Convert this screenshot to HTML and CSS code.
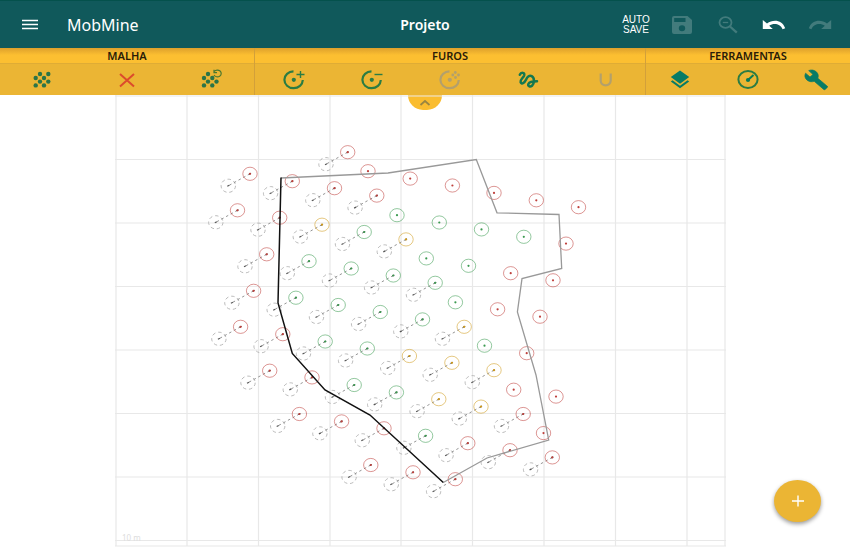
FILE: index.html
```html
<!DOCTYPE html>
<html lang="pt">
<head>
<meta charset="utf-8">
<meta name="viewport" content="width=device-width, initial-scale=1">
<title>MobMine - Projeto</title>
<link rel="stylesheet" href="styles.css">
</head>
<body>
<header class="appbar">
  <div class="brand">
    <button class="bar-btn menu-btn" aria-label="Menu"><svg width="16" height="12" viewBox="0 0 16 12"><path d="M0 1.500h16M0 5.500h16M0 9.500h16" stroke="#fff" stroke-width="1.500"/></svg></button>
    <span class="brand-name">MobMine</span>
  </div>
  <h1 class="title">Projeto</h1>
  <div class="actions">
    <button class="bar-btn autosave">AUTO<br>SAVE</button>
    <button class="bar-btn dim" aria-label="Salvar"><svg width="20" height="18" viewBox="0 0 20 18"><path fill="currentColor" fill-rule="evenodd" d="M2 0h13.500L20 4v12a2 2 0 0 1-2 2H2a2 2 0 0 1-2-2V2a2 2 0 0 1 2-2zM2.200 2v4h11.300V2zM10 9.200a3.200 3 0 1 0 0 6a3.200 3 0 1 0 0-6z"/></svg></button>
    <button class="bar-btn dim" aria-label="Diminuir zoom"><svg width="20" height="18" viewBox="0 0 20 18"><g fill="none" stroke="currentColor"><ellipse cx="7.500" cy="6.500" rx="6" ry="5.300" stroke-width="1.800"/><path d="M4.800 6.500h5.400" stroke-width="1.300"/><path d="M12 10.500l6.800 6.200" stroke-width="2.300"/></g></svg></button>
    <button class="bar-btn" aria-label="Desfazer"><svg width="24" height="12" viewBox="0 0 24 12"><path fill="currentColor" d="M.8 1v9h10L7.200 6.800C11 4 18 4 20.600 10.200l2.600-.9C20 .6 11 .2 5 4.600z"/></svg></button>
    <button class="bar-btn dim" aria-label="Refazer"><svg width="24" height="12" viewBox="0 0 24 12"><path fill="currentColor" d="M23.200 1v9h-10l3.600-3.200C13 4 6 4 3.400 10.200L.8 9.300C4 .6 13 .2 19 4.600z"/></svg></button>
  </div>
</header>

<nav class="toolbar">
  <section class="group">
    <h2 class="group-name">MALHA</h2>
    <div class="tools">
      <button class="tool" aria-label="Criar malha"><svg width="24" height="22" viewBox="0 0 24 22"><g fill="#2b7447"><circle cx="10" cy="5" r="2.200"/><circle cx="18.300" cy="5" r="2.200"/><circle cx="5.700" cy="9" r="2.200"/><circle cx="14" cy="9" r="2.200"/><circle cx="10" cy="12.600" r="2.200"/><circle cx="18.300" cy="12.600" r="2.200"/><circle cx="5.700" cy="16.400" r="2.200"/><circle cx="14" cy="16.400" r="2.200"/></g></svg></button>
      <button class="tool" aria-label="Excluir malha"><svg width="24" height="22" viewBox="0 0 24 22"><path d="M5 5l14 12.400M19 5L5 17.400" stroke="#dc4b2c" stroke-width="2"/></svg></button>
      <button class="tool" aria-label="Restaurar malha"><svg width="24" height="22" viewBox="0 0 24 22"><g fill="#2b7447"><circle cx="8" cy="5" r="2.200"/><circle cx="4" cy="9" r="2.200"/><circle cx="12.300" cy="9" r="2.200"/><circle cx="8" cy="12.600" r="2.200"/><circle cx="16.500" cy="12.600" r="2.200"/><circle cx="4" cy="16.400" r="2.200"/><circle cx="12.300" cy="16.400" r="2.200"/></g><path d="M14.300 2.500A3.800 3.400 0 1 1 14 6M14 .8v2.800h3" fill="none" stroke="#4a782f" stroke-width="1.200"/></svg></button>
    </div>
  </section>
  <section class="group">
    <h2 class="group-name">FUROS</h2>
    <div class="tools">
      <button class="tool" aria-label="Adicionar furo"><svg width="24" height="22" viewBox="0 0 24 22"><path d="M11.500 2.400A9.200 8.400 0 1 0 20.800 11" fill="none" stroke="#2b7c43" stroke-width="2.200"/><circle cx="11.800" cy="10.800" r="2.100" fill="#2b7c43"/><path d="M14.500 5.500h8M18.500 2v7" stroke="#2b7c43" stroke-width="1.400"/></svg></button>
      <button class="tool" aria-label="Remover furo"><svg width="24" height="22" viewBox="0 0 24 22"><path d="M11.500 2.400A9.200 8.400 0 1 0 20.800 11" fill="none" stroke="#2b7c43" stroke-width="2.200"/><circle cx="11.800" cy="10.800" r="2.100" fill="#2b7c43"/><path d="M14.500 5.500h8" stroke="#2b7c43" stroke-width="1.400"/></svg></button>
      <button class="tool" aria-label="Furos em grupo" disabled><svg width="24" height="22" viewBox="0 0 24 22"><path d="M11.500 2.400A9.200 8.400 0 1 0 20.800 11" fill="none" stroke="#b3a06c" stroke-width="2.200"/><g fill="#b3a06c"><circle cx="11.800" cy="10.800" r="2.100"/><circle cx="17.300" cy="3.500" r="1.400"/><circle cx="14.800" cy="6" r="1.400"/><circle cx="20.500" cy="6" r="1.400"/><circle cx="17.500" cy="8.500" r="1.400"/></g></svg></button>
      <button class="tool" aria-label="Ligar furos"><svg width="24" height="22" viewBox="0 0 24 22"><path d="M3.800 5.800C5 3 9 3.300 8.200 6.300C7.400 9 4 10.500 4.600 13C5.500 15.800 8.500 14 10 10.800C11.500 7.500 13.500 6 15.700 7.200C18.800 9 18.500 14.500 16 16.800C14 18.500 11.500 17 12.500 14.700C13.700 12.300 17 12.200 21 12.200" fill="none" stroke="#14784f" stroke-width="2.500" stroke-linecap="round" stroke-linejoin="round"/></svg></button>
      <button class="tool" aria-label="Ajuste magnético" disabled><svg width="24" height="22" viewBox="0 0 24 22"><path d="M6.700 4.500v7c0 6.500 10 6.500 10 0v-7" fill="none" stroke="#b3a06c" stroke-width="2.200"/></svg></button>
    </div>
  </section>
  <section class="group">
    <h2 class="group-name">FERRAMENTAS</h2>
    <div class="tools">
      <button class="tool" aria-label="Camadas"><svg width="24" height="22" viewBox="0 0 24 22"><path fill="#087b66" d="M12 1.500l9.200 6.600L12 14.700 2.800 8.100zM2.800 12.500l1.700-1.200 7.500 5.500 7.500-5.500 1.700 1.200L12 19.300z"/></svg></button>
      <button class="tool" aria-label="Medidor"><svg width="24" height="22" viewBox="0 0 24 22"><ellipse cx="12" cy="10.500" rx="9.600" ry="8.400" fill="none" stroke="#2b7c43" stroke-width="2"/><circle cx="12" cy="11" r="2.100" fill="#087b55"/><path d="M12 11l5.500-5" stroke="#087b55" stroke-width="1.900"/></svg></button>
      <button class="tool" aria-label="Configurar"><svg width="24" height="22" viewBox="0 0 24 22"><path fill="#087b66" stroke="#087b66" stroke-width=".7" stroke-linejoin="round" d="M23.300 17.300L13.800 9.200c1-2.200.4-4.700-1.500-6.400C10.200.9 7.200.5 4.700 1.600L9 5.400 6 8 1.600 4.200c-1.300 2.200-.8 4.900 1.300 6.800 2 1.700 4.900 2.200 7.300 1.300l9.500 8.100c.4.400 1 .4 1.400 0l2.200-2c.5-.3.500-.8 0-1.100z"/></svg></button>
    </div>
  </section>
  <button class="collapse" aria-label="Recolher"><svg width="12" height="8" viewBox="0 0 12 8"><path d="M1.500 6L6 2l4.500 4" fill="none" stroke="#9a8540" stroke-width="1.700"/></svg></button>
</nav>

<main class="workspace">
  <svg class="plan" viewBox="0 95 850 455" role="img" aria-label="Plano de furos">
    <defs>
      <g id="hole"><ellipse rx="7.200" ry="6.600" fill="none" stroke="currentColor" stroke-width="1" stroke-opacity=".55"/><circle r="1.100" fill="currentColor"/></g>
      <g id="slant"><ellipse cx="-21.700" cy="12" rx="7.200" ry="6.600" fill="none" stroke="#aaa" stroke-width=".8" stroke-dasharray="3.500 2.800"/><path d="M0 0L-21.700 12" stroke="#888" stroke-width=".9" stroke-dasharray="2.500 2.800"/><path d="M-22.700 12.500l2-1M-1 .5L1-.5" stroke="#555" stroke-width="1.200"/><use href="#hole"/></g>
    </defs>
    <g class="grid-lines">
      <path d="M116 95V546M187 95V546M258.500 95V546M330 95V546M401 95V546M472.500 95V546M544 95V546M615.500 95V546M687 95V546M725 95V546"/>
      <path d="M115 96H726M115 159.500H726M115 223H726M115 286.500H726M115 350H726M115 413.500H726M115 477H726M115 540.500H726M115 546H726"/>
    </g>
    <text class="scale" x="122" y="541">10 m</text>
    <g class="red">
      <use href="#slant" x="347.700" y="152.200"/><use href="#slant" x="250" y="173.800"/><use href="#slant" x="292.300" y="181.200"/><use href="#slant" x="334.500" y="188.200"/><use href="#slant" x="376.800" y="195.600"/>
      <use href="#slant" x="237.500" y="210.300"/><use href="#slant" x="279.700" y="217.700"/><use href="#slant" x="266.700" y="254.300"/><use href="#slant" x="253.600" y="290.800"/><use href="#slant" x="240.600" y="326.800"/>
      <use href="#slant" x="282.800" y="334.200"/><use href="#slant" x="269.700" y="370.700"/><use href="#slant" x="312" y="377.400"/><use href="#slant" x="299.400" y="414"/><use href="#slant" x="341.600" y="421.400"/>
      <use href="#slant" x="384" y="428.300"/><use href="#slant" x="370.800" y="465"/><use href="#slant" x="413" y="472.300"/><use href="#slant" x="455.300" y="479.200"/><use href="#slant" x="467.800" y="443.200"/>
      <use href="#slant" x="510" y="450.200"/><use href="#slant" x="552.300" y="457.400"/><use href="#slant" x="523.200" y="414"/>
      <use href="#hole" x="368" y="171.200"/><use href="#hole" x="410.200" y="178.600"/><use href="#hole" x="452.400" y="185.500"/><use href="#hole" x="494" y="192.900"/><use href="#hole" x="536.300" y="200.300"/>
      <use href="#hole" x="578.500" y="207.200"/><use href="#hole" x="566" y="243.600"/><use href="#hole" x="510.700" y="273.200"/><use href="#hole" x="553" y="280.300"/><use href="#hole" x="497.600" y="309.300"/>
      <use href="#hole" x="540" y="316.700"/><use href="#hole" x="526.700" y="353.200"/><use href="#hole" x="513.700" y="389.700"/><use href="#hole" x="556" y="396.600"/><use href="#hole" x="543.500" y="433.100"/>
    </g>
    <g class="yellow">
      <use href="#slant" x="322" y="224.700"/><use href="#slant" x="406" y="239.400"/><use href="#slant" x="464.200" y="326.800"/><use href="#slant" x="409.400" y="356"/>
      <use href="#slant" x="451.900" y="362.800"/><use href="#slant" x="494" y="370.200"/><use href="#slant" x="438.800" y="399.200"/><use href="#slant" x="481" y="406.600"/>
    </g>
    <g class="green">
      <use href="#slant" x="364.200" y="232"/><use href="#slant" x="309" y="261.200"/><use href="#slant" x="351.200" y="268.500"/><use href="#slant" x="393.300" y="275.500"/><use href="#slant" x="435.200" y="282.800"/>
      <use href="#slant" x="295.900" y="297.700"/><use href="#slant" x="338.200" y="305"/><use href="#slant" x="380.300" y="312"/><use href="#slant" x="422.500" y="319.400"/><use href="#slant" x="325.200" y="341.500"/>
      <use href="#slant" x="367.300" y="348.500"/><use href="#slant" x="354.200" y="385"/><use href="#slant" x="396.400" y="392.400"/><use href="#slant" x="425.600" y="435.800"/>
      <use href="#hole" x="397" y="215.200"/><use href="#hole" x="439.300" y="222.500"/><use href="#hole" x="481.500" y="229.400"/><use href="#hole" x="523.800" y="236.800"/>
      <use href="#hole" x="426.300" y="258.400"/><use href="#hole" x="468.500" y="265.800"/><use href="#hole" x="455.400" y="302.300"/><use href="#hole" x="484.500" y="345.700"/>
    </g>
    <path class="outline" d="M281 178L388 173 476.300 159.500 497 212.800 559 214.500 561.700 268.500 522 278.600 517.400 312 536 375 548.700 440 487 458 443.300 482.500"/>
    <path class="face" d="M281 177.500L278 303 292.300 353.500 325 390 370 415 443.300 482.500"/>
  </svg>
  <button class="fab" aria-label="Adicionar"><svg width="12" height="12" viewBox="0 0 12 12"><path d="M0 6h12M6 .5v11" stroke="#fff" stroke-width="1.400"/></svg></button>
</main>
</body>
</html>
```
FILE: styles.css
```css
* { box-sizing: border-box; }

body {
  margin: 0;
  min-height: 100vh;
  display: flex;
  flex-direction: column;
  background: #fff;
  font-family: "Noto Sans", "Open Sans", sans-serif;
  overflow: hidden;
}

button {
  padding: 0;
  border: 0;
  background: none;
  font: inherit;
  color: inherit;
  display: flex;
  align-items: center;
  justify-content: center;
}

svg { display: block; }

.appbar {
  height: 48px;
  flex: none;
  display: grid;
  grid-template-columns: 1fr auto 1fr;
  align-items: center;
  padding: 0 7px;
  border-top: 1px solid #04514c;
  background: #10595b;
  color: #fff;
}

.brand {
  display: flex;
  align-items: center;
  gap: 14px;
}

.bar-btn {
  width: 46px;
  height: 32px;
}

.brand-name {
  font-size: 16px;
  line-height: 24px;
}

.title {
  margin: 0;
  font-size: 14px;
  line-height: 24px;
  font-weight: 600;
}

.actions {
  display: flex;
  justify-content: flex-end;
}

.autosave {
  font: 10px/10px "Liberation Sans", sans-serif;
}

.dim { color: #427b7c; }

.toolbar {
  position: relative;
  flex: none;
  display: grid;
  grid-template-columns: 254fr 391fr 205fr;
  background: #ebb534;
}

.group + .group { border-left: 1px solid #d2a03a; }

.group-name {
  margin: 0;
  height: 16px;
  border-bottom: 1px solid #dfac35;
  background: linear-gradient(#dda02c, #fcbf31 7px);
  font-size: 11px;
  line-height: 16px;
  font-weight: 600;
  text-align: center;
  color: #2a1c08;
}

.tools {
  display: grid;
  grid-auto-flow: column;
  grid-auto-columns: 1fr;
  height: 31px;
}

.collapse {
  position: absolute;
  top: 100%;
  left: 50%;
  width: 34px;
  height: 15px;
  transform: translateX(-50%);
  border-radius: 0 0 17px 17px;
  background: #fabd30;
}

.workspace {
  position: relative;
  flex: 1;
}

.plan {
  width: 100%;
  height: auto;
}

.grid-lines {
  fill: none;
  stroke: #e8e8e8;
  stroke-width: 1.2;
}

.scale {
  font-size: 8px;
  fill: #ddd;
}

.red { color: #bf403c; }
.yellow { color: #cf9a1c; }
.green { color: #3b9a50; }

.outline {
  fill: none;
  stroke: #999;
  stroke-width: 1.3;
}

.face {
  fill: none;
  stroke: #111;
  stroke-width: 1.5;
}

.fab {
  position: absolute;
  right: 29px;
  bottom: 28px;
  width: 47px;
  height: 42px;
  border-radius: 50%;
  background: #ebb534;
  box-shadow: 0 2px 4px rgba(0, 0, 0, .4);
}
```
